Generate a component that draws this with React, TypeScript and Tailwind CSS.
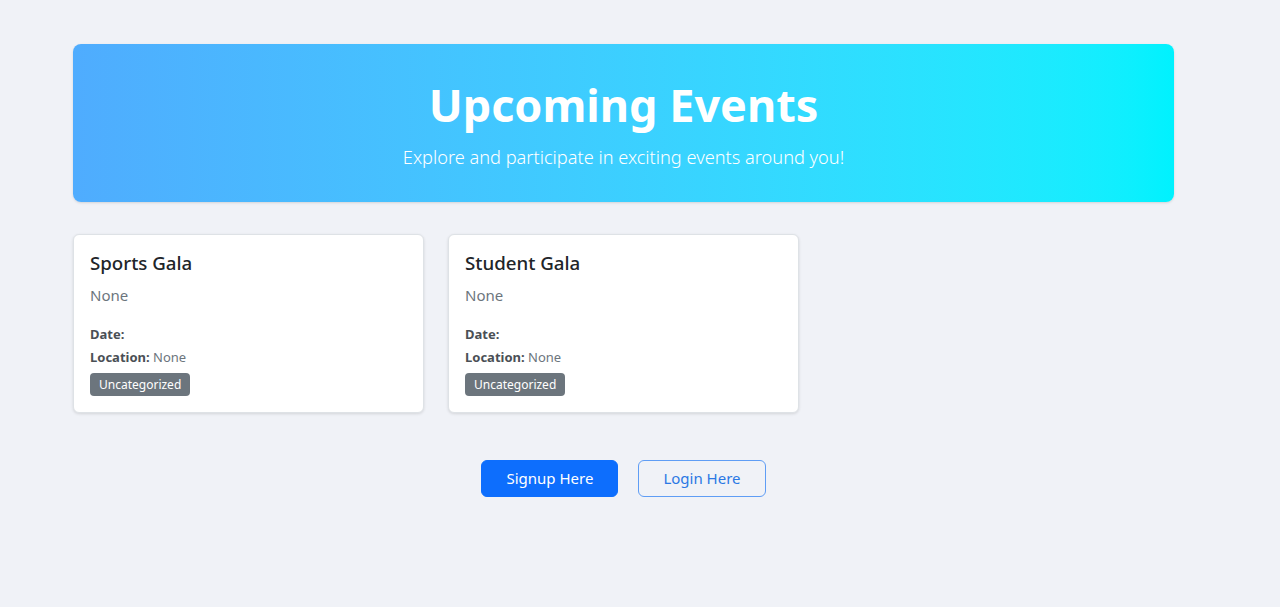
import React from 'react';

type EventItem = {
  title: string;
  description: string;
  date: string;
  location: string;
  category: string;
};

const events: EventItem[] = [
  { title: 'Sports Gala', description: 'None', date: '', location: 'None', category: 'Uncategorized' },
  { title: 'Student Gala', description: 'None', date: '', location: 'None', category: 'Uncategorized' },
];

const EventCard: React.FC<{ event: EventItem }> = ({ event }) => (
  <div className="bg-white border border-[#dee2e6] rounded-[6px] shadow-[0_1px_3px_rgba(0,0,0,0.12)] p-4">
    <h5 className="text-[18.7px] leading-[24px] font-medium text-[#212529] mb-2">{event.title}</h5>
    <p className="text-[15px] leading-[24px] text-[#6c757d] mb-[17px]">{event.description}</p>
    <p className="text-[13px] leading-[21px] text-[#4a4f55] mb-[2px]">
      <span className="font-bold">Date:</span> {event.date}
    </p>
    <p className="text-[13px] leading-[21px] text-[#6c757d] mb-[3px]">
      <span className="font-bold text-[#4a4f55]">Location:</span> {event.location}
    </p>
    <span className="inline-block bg-[#6c757d] text-white text-[12px] leading-[12px] px-[9px] py-[5.5px] rounded-[4px]">
      {event.category}
    </span>
  </div>
);

const App: React.FC = () => {
  return (
    <div className="min-h-screen bg-[#f0f2f7] pt-[44px] pb-10 font-['Noto_Sans','Open_Sans',sans-serif]">
      <div className="ml-[73px] w-[1101px]">
        {/* Hero banner */}
        <div className="rounded-[8px] bg-gradient-to-r from-[#4facfe] to-[#00f2fe] shadow-sm pt-8 pb-[30px] text-center text-white">
          <h1 className="text-[45px] leading-[57.6px] font-bold mb-2">Upcoming Events</h1>
          <p className="text-[18.2px] leading-[30px] font-light">Explore and participate in exciting events around you!</p>
        </div>

        {/* Event cards */}
        <div className="grid grid-cols-3 gap-6 mt-8">
          {events.map((e) => (
            <EventCard key={e.title} event={e} />
          ))}
        </div>

        {/* Auth buttons */}
        <div className="flex justify-center gap-5 mt-[47px]">
          <button className="bg-[#0d6efd] text-white text-[15px] leading-[23px] px-6 py-[6px] border border-[#0d6efd] rounded-[6px]">
            Signup Here
          </button>
          <button className="bg-transparent text-[#2b78e4] text-[15px] leading-[23px] px-6 py-[6px] border border-[#5f9df5] rounded-[6px]">
            Login Here
          </button>
        </div>
      </div>
    </div>
  );
};

export default App;
